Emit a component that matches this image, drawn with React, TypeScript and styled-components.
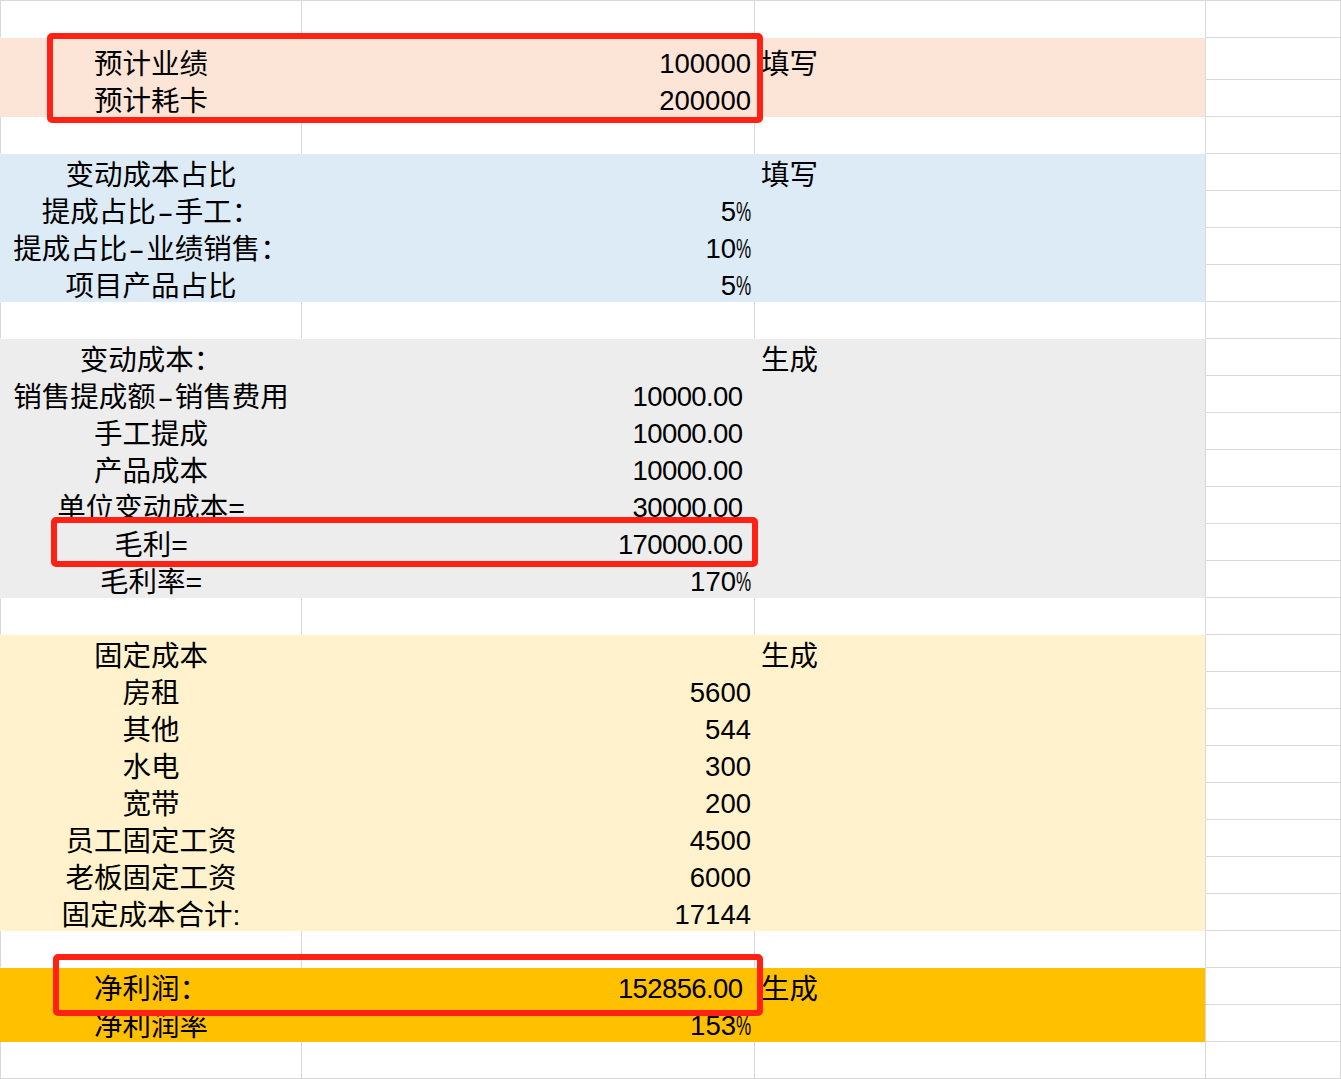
import React from "react";
import styled, { createGlobalStyle } from "styled-components";

const LINE = "#d9d9d9";
const SALMON = "#fce4d6";
const BLUE = "#ddebf7";
const GRAY = "#ededed";
const YELLOW = "#fff2cc";
const ORANGE = "#ffc000";
const RED = "#ff2114";

const Global = createGlobalStyle`
  html, body { margin: 0; padding: 0; background: #ffffff; }
  body { font-family: "Liberation Sans", "Noto Sans CJK SC", sans-serif; color: #000; }
  * { box-sizing: border-box; }
`;

const Page = styled.div`
  position: relative;
  width: 1341px;
  height: 1079px;
  overflow: hidden;
`;

const Sheet = styled.div`
  display: flex;
  flex-direction: column;
  border-top: 1px solid ${LINE};
`;

const Row = styled.div<{ $h: number }>`
  display: grid;
  grid-template-columns: 302px 453px 451px 135px;
  height: ${(p) => p.$h}px;
`;

type CellProps = { $bg?: string; $last?: boolean };

const BaseCell = styled.div<CellProps>`
  display: flex;
  align-items: flex-end;
  white-space: nowrap;
  background: ${(p) => p.$bg ?? "#ffffff"};
  border-bottom: 1px solid
    ${(p) => (p.$last ? LINE : p.$bg ? "transparent" : "#ffffff")};
  line-height: 30px;
`;

const LabelCell = styled(BaseCell)`
  justify-content: center;
  border-left: 1px solid ${(p) => (p.$bg ? "transparent" : LINE)};
  border-right: 1px solid ${(p) => (p.$bg ? "transparent" : LINE)};
  font-family: "Liberation Sans", "Noto Sans CJK SC", sans-serif;
  font-size: 28.5px;
`;

const ValueCell = styled(BaseCell)<{ $dec?: boolean }>`
  justify-content: flex-end;
  padding-right: ${(p) => (p.$dec ? 11.5 : 3)}px;
  letter-spacing: ${(p) => (p.$dec ? "-0.6px" : "0")};
  border-right: 1px solid ${(p) => (p.$bg ? "transparent" : LINE)};
  font-family: "Liberation Sans", sans-serif;
  font-size: 27.5px;
`;

const TagCell = styled(BaseCell)`
  justify-content: flex-start;
  padding-left: 6px;
  border-right: 1px solid ${LINE};
  font-family: "Liberation Sans", "Noto Sans CJK SC", sans-serif;
  font-size: 28.5px;
`;

const SpareCell = styled.div`
  background: #ffffff;
  border-right: 1px solid ${LINE};
  border-bottom: 1px solid ${LINE};
`;

const Dash = styled.span`
  display: inline-block;
  width: 19px;
  text-align: center;
  transform: scaleX(1.7);
`;

const Pct = styled.span`
  display: inline-block;
  width: 15px;
  overflow: visible;
  transform: scaleX(0.62);
  transform-origin: left bottom;
`;

const Highlight = styled.div<{ $x: number; $y: number; $w: number; $h: number }>`
  position: absolute;
  left: ${(p) => p.$x}px;
  top: ${(p) => p.$y}px;
  width: ${(p) => p.$w}px;
  height: ${(p) => p.$h}px;
  border: 6px solid ${RED};
  border-radius: 5px;
  pointer-events: none;
`;

type RowData = {
  bg?: string;
  h?: number;
  label?: React.ReactNode;
  value?: React.ReactNode;
  dec?: boolean;
  tag?: string;
};

const pct = (n: string) => (
  <>
    {n}
    <Pct>%</Pct>
  </>
);

const rows: RowData[] = [
  {},
  { bg: SALMON, h: 42, label: "预计业绩", value: "100000", tag: "填写" },
  { bg: SALMON, label: "预计耗卡", value: "200000" },
  {},
  { bg: BLUE, label: "变动成本占比", tag: "填写" },
  {
    bg: BLUE,
    label: (
      <>
        提成占比<Dash>-</Dash>手工：
      </>
    ),
    value: pct("5"),
  },
  {
    bg: BLUE,
    label: (
      <>
        提成占比<Dash>-</Dash>业绩销售：
      </>
    ),
    value: pct("10"),
  },
  { bg: BLUE, label: "项目产品占比", value: pct("5") },
  {},
  { bg: GRAY, label: "变动成本：", tag: "生成" },
  {
    bg: GRAY,
    label: (
      <>
        销售提成额<Dash>-</Dash>销售费用
      </>
    ),
    value: "10000.00",
    dec: true,
  },
  { bg: GRAY, label: "手工提成", value: "10000.00", dec: true },
  { bg: GRAY, label: "产品成本", value: "10000.00", dec: true },
  { bg: GRAY, label: "单位变动成本=", value: "30000.00", dec: true },
  { bg: GRAY, label: "毛利=", value: "170000.00", dec: true },
  { bg: GRAY, label: "毛利率=", value: pct("170") },
  {},
  { bg: YELLOW, label: "固定成本", tag: "生成" },
  { bg: YELLOW, label: "房租", value: "5600" },
  { bg: YELLOW, label: "其他", value: "544" },
  { bg: YELLOW, label: "水电", value: "300" },
  { bg: YELLOW, label: "宽带", value: "200" },
  { bg: YELLOW, label: "员工固定工资", value: "4500" },
  { bg: YELLOW, label: "老板固定工资", value: "6000" },
  { bg: YELLOW, label: "固定成本合计:", value: "17144" },
  {},
  { bg: ORANGE, label: "净利润：", value: "152856.00", dec: true, tag: "生成" },
  { bg: ORANGE, label: "净利润率", value: pct("153") },
  {},
];

export default function App() {
  return (
    <Page>
      <Global />
      <Sheet>
        {rows.map((r, i) => {
          const last = i === rows.length - 1;
          return (
            <Row key={i} $h={r.h ?? 37}>
              <LabelCell $bg={r.bg} $last={last}>
                {r.label}
              </LabelCell>
              <ValueCell $bg={r.bg} $last={last} $dec={r.dec}>
                {r.value}
              </ValueCell>
              <TagCell $bg={r.bg} $last={last}>
                {r.tag}
              </TagCell>
              <SpareCell />
            </Row>
          );
        })}
      </Sheet>
      <Highlight $x={47} $y={33} $w={716} $h={90} />
      <Highlight $x={51} $y={517} $w={707} $h={50} />
      <Highlight $x={53} $y={954} $w={710} $h={62} />
    </Page>
  );
}
